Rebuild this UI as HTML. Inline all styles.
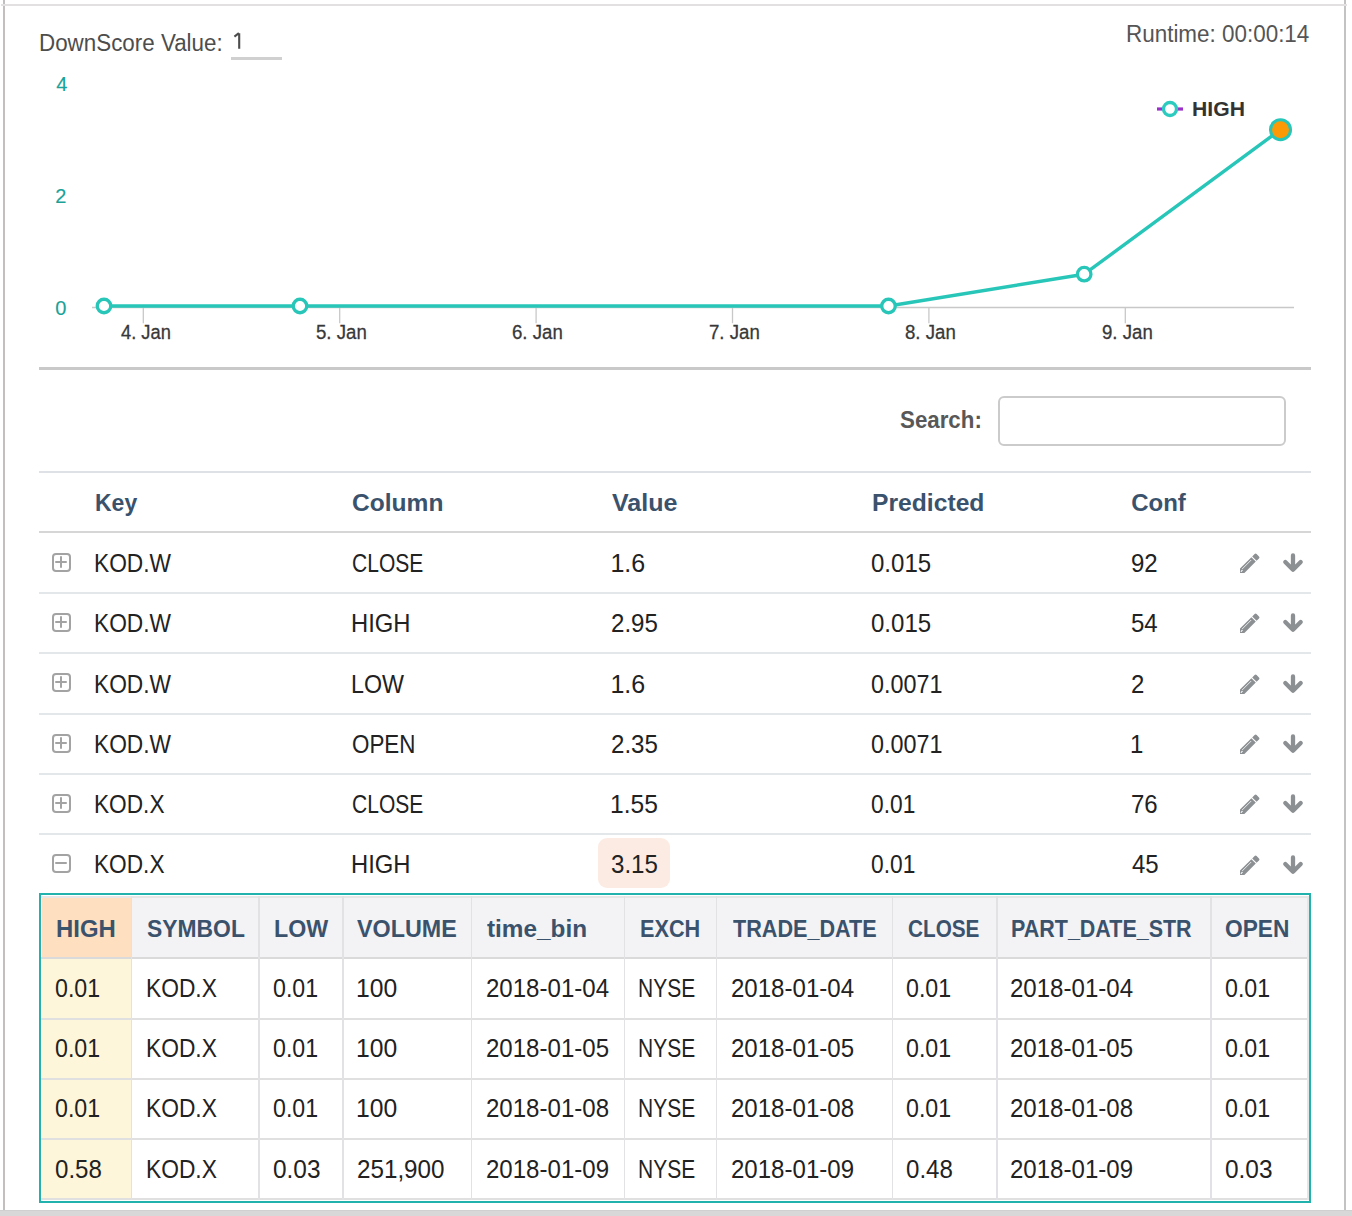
<!DOCTYPE html>
<html><head><meta charset="utf-8"><title>DownScore</title>
<style>
html,body{margin:0;padding:0;background:#fff;width:1352px;height:1216px;overflow:hidden;}
body{position:relative;font-family:"Liberation Sans", sans-serif;}
.r{position:absolute;}
.t{position:absolute;white-space:pre;line-height:1;transform-origin:0 0;}
</style></head><body>
<div class="r" style="left:3px;top:0px;width:2px;height:1210px;background:#c2bfbf;"></div>
<div class="r" style="left:1344px;top:0px;width:2px;height:1210px;background:#c4c3c3;"></div>
<div class="r" style="left:1px;top:4px;width:1346px;height:2px;background:#e2e0e0;"></div>
<div class="r" style="left:0px;top:1210px;width:1352px;height:6px;background:#d8d8d8;"></div>
<div class="r" style="left:0px;top:1210px;width:1352px;height:1px;background:#d0d0d0;"></div>
<div class="t" style="left:39.15px;top:31.53px;font-size:23px;font-weight:400;color:#4d4d4d;transform:scaleX(0.9730);">DownScore Value:</div>
<svg class="r" style="left:230px;top:28px" width="14" height="24"><path d="M9.2 5.2 V20.8 M4.4 8.6 L8.9 5.2" fill="none" stroke="#4d4d4d" stroke-width="2.1" stroke-linecap="butt" stroke-linejoin="round"/></svg>
<div class="r" style="left:231px;top:57px;width:51px;height:3px;background:#d0d0d0;"></div>
<div class="t" style="left:1126.45px;top:22.53px;font-size:23px;font-weight:400;color:#555;transform:scaleX(0.9753);">Runtime: 00:00:14</div>
<svg class="r" style="left:0;top:0" width="1352" height="380"><line x1="92" y1="307.5" x2="1294" y2="307.5" stroke="#c8c8c8" stroke-width="1.5"/><line x1="143.3" y1="308" x2="143.3" y2="323.2" stroke="#c8c8c8" stroke-width="1.3"/><line x1="339.7" y1="308" x2="339.7" y2="323.2" stroke="#c8c8c8" stroke-width="1.3"/><line x1="536.1" y1="308" x2="536.1" y2="323.2" stroke="#c8c8c8" stroke-width="1.3"/><line x1="732.5" y1="308" x2="732.5" y2="323.2" stroke="#c8c8c8" stroke-width="1.3"/><line x1="928.9" y1="308" x2="928.9" y2="323.2" stroke="#c8c8c8" stroke-width="1.3"/><line x1="1125.3" y1="308" x2="1125.3" y2="323.2" stroke="#c8c8c8" stroke-width="1.3"/><path d="M104,306 L300,306 L888.5,306 L1084.2,274.2 L1280.5,129.7" fill="none" stroke="#28c6b9" stroke-width="3.4" stroke-linejoin="round"/><circle cx="104" cy="306" r="6.75" fill="#fff" stroke="#28c6b9" stroke-width="3.3"/><circle cx="300" cy="306" r="6.75" fill="#fff" stroke="#28c6b9" stroke-width="3.3"/><circle cx="888.5" cy="306" r="6.75" fill="#fff" stroke="#28c6b9" stroke-width="3.3"/><circle cx="1084.2" cy="274.2" r="6.75" fill="#fff" stroke="#28c6b9" stroke-width="3.3"/><circle cx="1280.5" cy="129.7" r="10" fill="#fd9905" stroke="#28c6b9" stroke-width="3.1"/><line x1="1157" y1="109" x2="1183" y2="109" stroke="#9b30c8" stroke-width="3.2"/><circle cx="1170" cy="109" r="6.5" fill="#fff" stroke="#2ccbbf" stroke-width="3.3"/></svg>
<div class="t" style="left:1191.99px;top:97.82px;font-size:21px;font-weight:700;color:#333;transform:scaleX(1.0080);">HIGH</div>
<div class="t" style="left:56.20px;top:73.57px;font-size:20px;font-weight:400;color:#1aa299;-webkit-text-stroke:0.15px #1aa299;">4</div>
<div class="t" style="left:55.20px;top:185.87px;font-size:20px;font-weight:400;color:#1aa299;-webkit-text-stroke:0.15px #1aa299;">2</div>
<div class="t" style="left:55.20px;top:298.07px;font-size:20px;font-weight:400;color:#1aa299;-webkit-text-stroke:0.15px #1aa299;">0</div>
<div class="t" style="left:120.50px;top:322.27px;font-size:20px;font-weight:400;color:#383838;transform:scaleX(0.9151);-webkit-text-stroke:0.3px #383838;">4. Jan</div>
<div class="t" style="left:315.97px;top:322.27px;font-size:20px;font-weight:400;color:#383838;transform:scaleX(0.9327);-webkit-text-stroke:0.3px #383838;">5. Jan</div>
<div class="t" style="left:512.37px;top:322.27px;font-size:20px;font-weight:400;color:#383838;transform:scaleX(0.9327);-webkit-text-stroke:0.3px #383838;">6. Jan</div>
<div class="t" style="left:708.77px;top:322.27px;font-size:20px;font-weight:400;color:#383838;transform:scaleX(0.9327);-webkit-text-stroke:0.3px #383838;">7. Jan</div>
<div class="t" style="left:905.17px;top:322.27px;font-size:20px;font-weight:400;color:#383838;transform:scaleX(0.9327);-webkit-text-stroke:0.3px #383838;">8. Jan</div>
<div class="t" style="left:1101.57px;top:322.27px;font-size:20px;font-weight:400;color:#383838;transform:scaleX(0.9327);-webkit-text-stroke:0.3px #383838;">9. Jan</div>
<div class="r" style="left:39px;top:367px;width:1272px;height:3px;background:#c9c9c9;"></div>
<div class="t" style="left:900.27px;top:407.68px;font-size:24px;font-weight:700;color:#585858;transform:scaleX(0.9294);">Search:</div>
<div class="r" style="left:998px;top:396px;width:287.5px;height:49.5px;background:#fff;border:2px solid #cbcbcb;border-radius:6px;box-sizing:border-box;"></div>
<div class="r" style="left:39px;top:471px;width:1272px;height:2px;background:#dee2e6;"></div>
<div class="t" style="left:94.54px;top:490.68px;font-size:24px;font-weight:700;color:#3b526d;transform:scaleX(0.9581);">Key</div>
<div class="t" style="left:351.78px;top:490.68px;font-size:24px;font-weight:700;color:#3b526d;transform:scaleX(1.0230);">Column</div>
<div class="t" style="left:612.10px;top:490.68px;font-size:24px;font-weight:700;color:#3b526d;transform:scaleX(1.0435);">Value</div>
<div class="t" style="left:871.57px;top:490.68px;font-size:24px;font-weight:700;color:#3b526d;transform:scaleX(1.0280);">Predicted</div>
<div class="t" style="left:1131.20px;top:490.68px;font-size:24px;font-weight:700;color:#3b526d;">Conf</div>
<div class="r" style="left:39px;top:531px;width:1272px;height:2px;background:#d6d6d6;"></div>
<div class="r" style="left:52px;top:553px;width:19px;height:19px;box-sizing:border-box;border:2px solid #a3a3a3;border-radius:4px;"></div>
<div class="r" style="left:55px;top:561px;width:12px;height:2px;border-radius:1px;background:#a3a3a3"></div>
<div class="r" style="left:60px;top:556px;width:2px;height:12px;border-radius:1px;background:#a3a3a3"></div>
<div class="t" style="left:94.18px;top:550.84px;font-size:25px;font-weight:400;color:#222;transform:scaleX(0.9096);">KOD.W</div>
<div class="t" style="left:351.96px;top:550.84px;font-size:25px;font-weight:400;color:#222;transform:scaleX(0.8410);">CLOSE</div>
<div class="t" style="left:610.40px;top:550.84px;font-size:25px;font-weight:400;color:#222;">1.6</div>
<div class="t" style="left:871.24px;top:550.84px;font-size:25px;font-weight:400;color:#222;transform:scaleX(0.9607);">0.015</div>
<div class="t" style="left:1131.34px;top:550.84px;font-size:25px;font-weight:400;color:#222;transform:scaleX(0.9600);">92</div>
<svg class="r" style="left:1238px;top:553px" width="70" height="22" viewBox="0 0 70 22"><g fill="#8c9093"><path d="M2 20 L2 15.6 L13.4 4.2 L17.8 8.6 L6.4 20 Z"/><path d="M14.2 3.4 L16.6 1 Q17.6 0 18.6 1 L21 3.4 Q22 4.4 21 5.4 L18.6 7.8 Z"/></g><path d="M4.1 16.1 L13.2 7" stroke="#fff" stroke-width="0.8"/><path d="M3.2 18.3 L4.2 17.3" stroke="#fff" stroke-width="1.1" stroke-linecap="round"/><path d="M55 2.5 V16.7 M47.3 9.0 L55 16.7 L62.7 9.0" fill="none" stroke="#8c9093" stroke-width="4.3" stroke-linecap="round" stroke-linejoin="round"/></svg>
<div class="r" style="left:39px;top:592px;width:1272px;height:2px;background:#e4e7ea;"></div>
<div class="r" style="left:52px;top:613px;width:19px;height:19px;box-sizing:border-box;border:2px solid #a3a3a3;border-radius:4px;"></div>
<div class="r" style="left:55px;top:621px;width:12px;height:2px;border-radius:1px;background:#a3a3a3"></div>
<div class="r" style="left:60px;top:616px;width:2px;height:12px;border-radius:1px;background:#a3a3a3"></div>
<div class="t" style="left:94.18px;top:611.17px;font-size:25px;font-weight:400;color:#222;transform:scaleX(0.9096);">KOD.W</div>
<div class="t" style="left:350.89px;top:611.17px;font-size:25px;font-weight:400;color:#222;transform:scaleX(0.9525);">HIGH</div>
<div class="t" style="left:611.44px;top:611.17px;font-size:25px;font-weight:400;color:#222;transform:scaleX(0.9638);">2.95</div>
<div class="t" style="left:871.24px;top:611.17px;font-size:25px;font-weight:400;color:#222;transform:scaleX(0.9607);">0.015</div>
<div class="t" style="left:1131.34px;top:611.17px;font-size:25px;font-weight:400;color:#222;transform:scaleX(0.9600);">54</div>
<svg class="r" style="left:1238px;top:613px" width="70" height="22" viewBox="0 0 70 22"><g fill="#8c9093"><path d="M2 20 L2 15.6 L13.4 4.2 L17.8 8.6 L6.4 20 Z"/><path d="M14.2 3.4 L16.6 1 Q17.6 0 18.6 1 L21 3.4 Q22 4.4 21 5.4 L18.6 7.8 Z"/></g><path d="M4.1 16.1 L13.2 7" stroke="#fff" stroke-width="0.8"/><path d="M3.2 18.3 L4.2 17.3" stroke="#fff" stroke-width="1.1" stroke-linecap="round"/><path d="M55 2.5 V16.7 M47.3 9.0 L55 16.7 L62.7 9.0" fill="none" stroke="#8c9093" stroke-width="4.3" stroke-linecap="round" stroke-linejoin="round"/></svg>
<div class="r" style="left:39px;top:652px;width:1272px;height:2px;background:#e4e7ea;"></div>
<div class="r" style="left:52px;top:673px;width:19px;height:19px;box-sizing:border-box;border:2px solid #a3a3a3;border-radius:4px;"></div>
<div class="r" style="left:55px;top:681px;width:12px;height:2px;border-radius:1px;background:#a3a3a3"></div>
<div class="r" style="left:60px;top:676px;width:2px;height:12px;border-radius:1px;background:#a3a3a3"></div>
<div class="t" style="left:94.18px;top:671.50px;font-size:25px;font-weight:400;color:#222;transform:scaleX(0.9096);">KOD.W</div>
<div class="t" style="left:350.94px;top:671.50px;font-size:25px;font-weight:400;color:#222;transform:scaleX(0.9309);">LOW</div>
<div class="t" style="left:610.40px;top:671.50px;font-size:25px;font-weight:400;color:#222;">1.6</div>
<div class="t" style="left:871.27px;top:671.50px;font-size:25px;font-weight:400;color:#222;transform:scaleX(0.9347);">0.0071</div>
<div class="t" style="left:1131.34px;top:671.50px;font-size:25px;font-weight:400;color:#222;transform:scaleX(0.9600);">2</div>
<svg class="r" style="left:1238px;top:674px" width="70" height="22" viewBox="0 0 70 22"><g fill="#8c9093"><path d="M2 20 L2 15.6 L13.4 4.2 L17.8 8.6 L6.4 20 Z"/><path d="M14.2 3.4 L16.6 1 Q17.6 0 18.6 1 L21 3.4 Q22 4.4 21 5.4 L18.6 7.8 Z"/></g><path d="M4.1 16.1 L13.2 7" stroke="#fff" stroke-width="0.8"/><path d="M3.2 18.3 L4.2 17.3" stroke="#fff" stroke-width="1.1" stroke-linecap="round"/><path d="M55 2.5 V16.7 M47.3 9.0 L55 16.7 L62.7 9.0" fill="none" stroke="#8c9093" stroke-width="4.3" stroke-linecap="round" stroke-linejoin="round"/></svg>
<div class="r" style="left:39px;top:713px;width:1272px;height:2px;background:#e4e7ea;"></div>
<div class="r" style="left:52px;top:734px;width:19px;height:19px;box-sizing:border-box;border:2px solid #a3a3a3;border-radius:4px;"></div>
<div class="r" style="left:55px;top:742px;width:12px;height:2px;border-radius:1px;background:#a3a3a3"></div>
<div class="r" style="left:60px;top:737px;width:2px;height:12px;border-radius:1px;background:#a3a3a3"></div>
<div class="t" style="left:94.18px;top:731.83px;font-size:25px;font-weight:400;color:#222;transform:scaleX(0.9096);">KOD.W</div>
<div class="t" style="left:351.90px;top:731.83px;font-size:25px;font-weight:400;color:#222;transform:scaleX(0.8956);">OPEN</div>
<div class="t" style="left:611.44px;top:731.83px;font-size:25px;font-weight:400;color:#222;transform:scaleX(0.9638);">2.35</div>
<div class="t" style="left:871.27px;top:731.83px;font-size:25px;font-weight:400;color:#222;transform:scaleX(0.9347);">0.0071</div>
<div class="t" style="left:1130.38px;top:731.83px;font-size:25px;font-weight:400;color:#222;transform:scaleX(0.9600);">1</div>
<svg class="r" style="left:1238px;top:734px" width="70" height="22" viewBox="0 0 70 22"><g fill="#8c9093"><path d="M2 20 L2 15.6 L13.4 4.2 L17.8 8.6 L6.4 20 Z"/><path d="M14.2 3.4 L16.6 1 Q17.6 0 18.6 1 L21 3.4 Q22 4.4 21 5.4 L18.6 7.8 Z"/></g><path d="M4.1 16.1 L13.2 7" stroke="#fff" stroke-width="0.8"/><path d="M3.2 18.3 L4.2 17.3" stroke="#fff" stroke-width="1.1" stroke-linecap="round"/><path d="M55 2.5 V16.7 M47.3 9.0 L55 16.7 L62.7 9.0" fill="none" stroke="#8c9093" stroke-width="4.3" stroke-linecap="round" stroke-linejoin="round"/></svg>
<div class="r" style="left:39px;top:773px;width:1272px;height:2px;background:#e4e7ea;"></div>
<div class="r" style="left:52px;top:794px;width:19px;height:19px;box-sizing:border-box;border:2px solid #a3a3a3;border-radius:4px;"></div>
<div class="r" style="left:55px;top:802px;width:12px;height:2px;border-radius:1px;background:#a3a3a3"></div>
<div class="r" style="left:60px;top:797px;width:2px;height:12px;border-radius:1px;background:#a3a3a3"></div>
<div class="t" style="left:94.19px;top:792.16px;font-size:25px;font-weight:400;color:#222;transform:scaleX(0.9067);">KOD.X</div>
<div class="t" style="left:351.96px;top:792.16px;font-size:25px;font-weight:400;color:#222;transform:scaleX(0.8410);">CLOSE</div>
<div class="t" style="left:610.43px;top:792.16px;font-size:25px;font-weight:400;color:#222;transform:scaleX(0.9848);">1.55</div>
<div class="t" style="left:871.29px;top:792.16px;font-size:25px;font-weight:400;color:#222;transform:scaleX(0.9106);">0.01</div>
<div class="t" style="left:1131.34px;top:792.16px;font-size:25px;font-weight:400;color:#222;transform:scaleX(0.9600);">76</div>
<svg class="r" style="left:1238px;top:794px" width="70" height="22" viewBox="0 0 70 22"><g fill="#8c9093"><path d="M2 20 L2 15.6 L13.4 4.2 L17.8 8.6 L6.4 20 Z"/><path d="M14.2 3.4 L16.6 1 Q17.6 0 18.6 1 L21 3.4 Q22 4.4 21 5.4 L18.6 7.8 Z"/></g><path d="M4.1 16.1 L13.2 7" stroke="#fff" stroke-width="0.8"/><path d="M3.2 18.3 L4.2 17.3" stroke="#fff" stroke-width="1.1" stroke-linecap="round"/><path d="M55 2.5 V16.7 M47.3 9.0 L55 16.7 L62.7 9.0" fill="none" stroke="#8c9093" stroke-width="4.3" stroke-linecap="round" stroke-linejoin="round"/></svg>
<div class="r" style="left:39px;top:833px;width:1272px;height:2px;background:#e4e7ea;"></div>
<div class="r" style="left:598px;top:838px;width:72px;height:50px;background:#fcebe3;border-radius:9px;"></div>
<div class="r" style="left:52px;top:854px;width:19px;height:19px;box-sizing:border-box;border:2px solid #a3a3a3;border-radius:4px;"></div>
<div class="r" style="left:55px;top:862px;width:12px;height:2px;border-radius:1px;background:#a3a3a3"></div>
<div class="t" style="left:94.19px;top:852.49px;font-size:25px;font-weight:400;color:#222;transform:scaleX(0.9067);">KOD.X</div>
<div class="t" style="left:350.89px;top:852.49px;font-size:25px;font-weight:400;color:#222;transform:scaleX(0.9525);">HIGH</div>
<div class="t" style="left:611.44px;top:852.49px;font-size:25px;font-weight:400;color:#222;transform:scaleX(0.9638);">3.15</div>
<div class="t" style="left:871.29px;top:852.49px;font-size:25px;font-weight:400;color:#222;transform:scaleX(0.9106);">0.01</div>
<div class="t" style="left:1132.30px;top:852.49px;font-size:25px;font-weight:400;color:#222;transform:scaleX(0.9600);">45</div>
<svg class="r" style="left:1238px;top:855px" width="70" height="22" viewBox="0 0 70 22"><g fill="#8c9093"><path d="M2 20 L2 15.6 L13.4 4.2 L17.8 8.6 L6.4 20 Z"/><path d="M14.2 3.4 L16.6 1 Q17.6 0 18.6 1 L21 3.4 Q22 4.4 21 5.4 L18.6 7.8 Z"/></g><path d="M4.1 16.1 L13.2 7" stroke="#fff" stroke-width="0.8"/><path d="M3.2 18.3 L4.2 17.3" stroke="#fff" stroke-width="1.1" stroke-linecap="round"/><path d="M55 2.5 V16.7 M47.3 9.0 L55 16.7 L62.7 9.0" fill="none" stroke="#8c9093" stroke-width="4.3" stroke-linecap="round" stroke-linejoin="round"/></svg>
<div class="r" style="left:39px;top:893px;width:1272px;height:310px;box-sizing:border-box;border:2px solid #22b2ad;"></div>
<div class="r" style="left:41.5px;top:896px;width:1266.5px;height:62px;background:#f3f3f5;"></div>
<div class="r" style="left:41.5px;top:897px;width:89px;height:60px;background:#fee0c0;"></div>
<div class="r" style="left:41.5px;top:958px;width:89px;height:241px;background:#fef6da;"></div>
<div class="r" style="left:41px;top:896px;width:1267px;height:1.5px;background:#e6e6e6;"></div>
<div class="r" style="left:41px;top:957px;width:1267px;height:2px;background:#dadada;"></div>
<div class="r" style="left:41px;top:1018px;width:1267px;height:1.5px;background:#e0e0e0;"></div>
<div class="r" style="left:41px;top:1078px;width:1267px;height:1.5px;background:#e0e0e0;"></div>
<div class="r" style="left:41px;top:1138px;width:1267px;height:1.5px;background:#e0e0e0;"></div>
<div class="r" style="left:41px;top:1198px;width:1267px;height:1.5px;background:#e0e0e0;"></div>
<div class="r" style="left:130.5px;top:896px;width:1.5px;height:304px;background:#e2e2e4;"></div>
<div class="r" style="left:258px;top:896px;width:1.5px;height:304px;background:#e2e2e4;"></div>
<div class="r" style="left:342px;top:896px;width:1.5px;height:304px;background:#e2e2e4;"></div>
<div class="r" style="left:470.6px;top:896px;width:1.5px;height:304px;background:#e2e2e4;"></div>
<div class="r" style="left:623.7px;top:896px;width:1.5px;height:304px;background:#e2e2e4;"></div>
<div class="r" style="left:715.6px;top:896px;width:1.5px;height:304px;background:#e2e2e4;"></div>
<div class="r" style="left:891.8px;top:896px;width:1.5px;height:304px;background:#e2e2e4;"></div>
<div class="r" style="left:996px;top:896px;width:1.5px;height:304px;background:#e2e2e4;"></div>
<div class="r" style="left:1210px;top:896px;width:1.5px;height:304px;background:#e2e2e4;"></div>
<div class="r" style="left:1307px;top:896px;width:2px;height:304px;background:#e6e6e6;"></div>
<div class="t" style="left:55.61px;top:916.68px;font-size:24px;font-weight:700;color:#3b526d;transform:scaleX(0.9948);">HIGH</div>
<div class="t" style="left:146.75px;top:916.68px;font-size:24px;font-weight:700;color:#3b526d;transform:scaleX(0.9535);">SYMBOL</div>
<div class="t" style="left:273.63px;top:916.68px;font-size:24px;font-weight:700;color:#3b526d;transform:scaleX(0.9673);">LOW</div>
<div class="t" style="left:357.20px;top:916.68px;font-size:24px;font-weight:700;color:#3b526d;transform:scaleX(0.9716);">VOLUME</div>
<div class="t" style="left:487.30px;top:916.68px;font-size:24px;font-weight:700;color:#3b526d;transform:scaleX(1.0134);">time_bin</div>
<div class="t" style="left:639.60px;top:916.68px;font-size:24px;font-weight:700;color:#3b526d;transform:scaleX(0.9031);">EXCH</div>
<div class="t" style="left:732.60px;top:916.68px;font-size:24px;font-weight:700;color:#3b526d;transform:scaleX(0.9006);">TRADE_DATE</div>
<div class="t" style="left:907.74px;top:916.68px;font-size:24px;font-weight:700;color:#3b526d;transform:scaleX(0.8642);">CLOSE</div>
<div class="t" style="left:1011.40px;top:916.68px;font-size:24px;font-weight:700;color:#3b526d;transform:scaleX(0.8950);">PART_DATE_STR</div>
<div class="t" style="left:1225.05px;top:916.68px;font-size:24px;font-weight:700;color:#3b526d;transform:scaleX(0.9470);">OPEN</div>
<div class="t" style="left:54.87px;top:976.24px;font-size:25px;font-weight:400;color:#222;transform:scaleX(0.9277);">0.01</div>
<div class="t" style="left:145.68px;top:976.24px;font-size:25px;font-weight:400;color:#222;transform:scaleX(0.9107);">KOD.X</div>
<div class="t" style="left:272.67px;top:976.24px;font-size:25px;font-weight:400;color:#222;transform:scaleX(0.9277);">0.01</div>
<div class="t" style="left:356.33px;top:976.24px;font-size:25px;font-weight:400;color:#222;transform:scaleX(0.9872);">100</div>
<div class="t" style="left:486.24px;top:976.24px;font-size:25px;font-weight:400;color:#222;transform:scaleX(0.9619);">2018-01-04</div>
<div class="t" style="left:638.32px;top:976.24px;font-size:25px;font-weight:400;color:#222;transform:scaleX(0.8400);">NYSE</div>
<div class="t" style="left:731.04px;top:976.24px;font-size:25px;font-weight:400;color:#222;transform:scaleX(0.9619);">2018-01-04</div>
<div class="t" style="left:905.87px;top:976.24px;font-size:25px;font-weight:400;color:#222;transform:scaleX(0.9277);">0.01</div>
<div class="t" style="left:1010.04px;top:976.24px;font-size:25px;font-weight:400;color:#222;transform:scaleX(0.9619);">2018-01-04</div>
<div class="t" style="left:1224.87px;top:976.24px;font-size:25px;font-weight:400;color:#222;transform:scaleX(0.9277);">0.01</div>
<div class="t" style="left:54.87px;top:1036.34px;font-size:25px;font-weight:400;color:#222;transform:scaleX(0.9277);">0.01</div>
<div class="t" style="left:145.68px;top:1036.34px;font-size:25px;font-weight:400;color:#222;transform:scaleX(0.9107);">KOD.X</div>
<div class="t" style="left:272.67px;top:1036.34px;font-size:25px;font-weight:400;color:#222;transform:scaleX(0.9277);">0.01</div>
<div class="t" style="left:356.33px;top:1036.34px;font-size:25px;font-weight:400;color:#222;transform:scaleX(0.9872);">100</div>
<div class="t" style="left:486.24px;top:1036.34px;font-size:25px;font-weight:400;color:#222;transform:scaleX(0.9619);">2018-01-05</div>
<div class="t" style="left:638.32px;top:1036.34px;font-size:25px;font-weight:400;color:#222;transform:scaleX(0.8400);">NYSE</div>
<div class="t" style="left:731.04px;top:1036.34px;font-size:25px;font-weight:400;color:#222;transform:scaleX(0.9619);">2018-01-05</div>
<div class="t" style="left:905.87px;top:1036.34px;font-size:25px;font-weight:400;color:#222;transform:scaleX(0.9277);">0.01</div>
<div class="t" style="left:1010.04px;top:1036.34px;font-size:25px;font-weight:400;color:#222;transform:scaleX(0.9619);">2018-01-05</div>
<div class="t" style="left:1224.87px;top:1036.34px;font-size:25px;font-weight:400;color:#222;transform:scaleX(0.9277);">0.01</div>
<div class="t" style="left:54.87px;top:1096.44px;font-size:25px;font-weight:400;color:#222;transform:scaleX(0.9277);">0.01</div>
<div class="t" style="left:145.68px;top:1096.44px;font-size:25px;font-weight:400;color:#222;transform:scaleX(0.9107);">KOD.X</div>
<div class="t" style="left:272.67px;top:1096.44px;font-size:25px;font-weight:400;color:#222;transform:scaleX(0.9277);">0.01</div>
<div class="t" style="left:356.33px;top:1096.44px;font-size:25px;font-weight:400;color:#222;transform:scaleX(0.9872);">100</div>
<div class="t" style="left:486.24px;top:1096.44px;font-size:25px;font-weight:400;color:#222;transform:scaleX(0.9619);">2018-01-08</div>
<div class="t" style="left:638.32px;top:1096.44px;font-size:25px;font-weight:400;color:#222;transform:scaleX(0.8400);">NYSE</div>
<div class="t" style="left:731.04px;top:1096.44px;font-size:25px;font-weight:400;color:#222;transform:scaleX(0.9619);">2018-01-08</div>
<div class="t" style="left:905.87px;top:1096.44px;font-size:25px;font-weight:400;color:#222;transform:scaleX(0.9277);">0.01</div>
<div class="t" style="left:1010.04px;top:1096.44px;font-size:25px;font-weight:400;color:#222;transform:scaleX(0.9619);">2018-01-08</div>
<div class="t" style="left:1224.87px;top:1096.44px;font-size:25px;font-weight:400;color:#222;transform:scaleX(0.9277);">0.01</div>
<div class="t" style="left:54.84px;top:1156.54px;font-size:25px;font-weight:400;color:#222;transform:scaleX(0.9638);">0.58</div>
<div class="t" style="left:145.68px;top:1156.54px;font-size:25px;font-weight:400;color:#222;transform:scaleX(0.9107);">KOD.X</div>
<div class="t" style="left:272.62px;top:1156.54px;font-size:25px;font-weight:400;color:#222;transform:scaleX(0.9766);">0.03</div>
<div class="t" style="left:357.33px;top:1156.54px;font-size:25px;font-weight:400;color:#222;transform:scaleX(0.9685);">251,900</div>
<div class="t" style="left:486.24px;top:1156.54px;font-size:25px;font-weight:400;color:#222;transform:scaleX(0.9619);">2018-01-09</div>
<div class="t" style="left:638.32px;top:1156.54px;font-size:25px;font-weight:400;color:#222;transform:scaleX(0.8400);">NYSE</div>
<div class="t" style="left:731.04px;top:1156.54px;font-size:25px;font-weight:400;color:#222;transform:scaleX(0.9619);">2018-01-09</div>
<div class="t" style="left:905.84px;top:1156.54px;font-size:25px;font-weight:400;color:#222;transform:scaleX(0.9638);">0.48</div>
<div class="t" style="left:1010.04px;top:1156.54px;font-size:25px;font-weight:400;color:#222;transform:scaleX(0.9619);">2018-01-09</div>
<div class="t" style="left:1224.82px;top:1156.54px;font-size:25px;font-weight:400;color:#222;transform:scaleX(0.9766);">0.03</div>
</body></html>
